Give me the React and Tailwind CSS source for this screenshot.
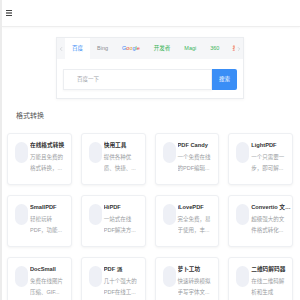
import { ChevronLeft, ChevronRight } from "lucide-react";

const tools = [
    { name: "在线格式转换", lines: ["万能且免费的", "格式转换，..."] },
    { name: "快用工具", lines: ["提供各种优", "质、快捷、..."] },
    { name: "PDF Candy", lines: ["一个免费在线", "的PDF编辑..."] },
    { name: "LightPDF", lines: ["一个只需要一", "步，即可解..."] },
    { name: "SmallPDF", lines: ["轻松玩转", "PDF，功能..."] },
    { name: "HiPDF", lines: ["一站式在线", "PDF解决方..."] },
    { name: "iLovePDF", lines: ["完全免费，易", "于使用，丰..."] },
    { name: "Convertio 文件转换", lines: ["超级强大的文", "件格式转化..."] },
    { name: "DocSmall", lines: ["免费在线图片", "压缩、GIF..."] },
    { name: "PDF 派", lines: ["几十个强大的", "PDF在线工..."] },
    { name: "萝卜工坊", lines: ["快速转换模拟", "手写字体文..."] },
    { name: "二维码解码器", lines: ["在线二维码解", "析和生成"] },
];

function SearchBox() {
    return (
        <div className="ml-[54px] mt-[10px] w-[188px] border border-[#ebedf0] bg-white shadow-[0_1px_3px_rgba(0,0,0,0.04)]">
            {/* Tabs */}
            <div className="flex h-[21px] items-stretch bg-[#f5f6f8] text-[5.5px]">
                <div className="flex w-[8px] items-center justify-center text-[#b5b8bd]">
                    <ChevronLeft className="size-[6px]" strokeWidth={2} />
                </div>
                <div className="flex flex-1 items-stretch overflow-hidden whitespace-nowrap">
                    <div className="flex items-center bg-white px-[7px] text-[#3a8ef6]">百度</div>
                    <div className="flex items-center px-[7px] text-[#8a8d92]">Bing</div>
                    <div className="flex items-center px-[7px]">
                        <span className="text-[#4285f4]">G</span>
                        <span className="text-[#ea4335]">o</span>
                        <span className="text-[#d4a017]">o</span>
                        <span className="text-[#4285f4]">g</span>
                        <span className="text-[#34a853]">l</span>
                        <span className="text-[#ea4335]">e</span>
                    </div>
                    <div className="flex items-center px-[7px] text-[#3cb55a]">开发者</div>
                    <div className="flex items-center px-[7px] text-[#3cb55a]">Magi</div>
                    <div className="flex items-center px-[7px] text-[#3cb55a]">360</div>
                    <div className="flex items-center pl-[6px] text-[#f0553c]">搜</div>
                </div>
                <div className="flex w-[8px] items-center justify-center text-[#b5b8bd]">
                    <ChevronRight className="size-[6px]" strokeWidth={2} />
                </div>
            </div>

            {/* Input */}
            <div className="flex px-[6px] pt-[10px] pb-[8px]">
                <div className="flex h-[21px] flex-1 items-center border border-[#eceef1] pl-[13px] text-[5.5px] text-[#a0a3a8] shadow-[0_1px_2px_rgba(0,0,0,0.04)]">
                    百度一下
                </div>
                <div className="flex h-[21px] w-[25px] items-center justify-center rounded-r-[2px] bg-[#3a8ef6] text-[5.5px] text-white">
                    搜索
                </div>
            </div>
        </div>
    );
}

function ToolCard({ tool }) {
    return (
        <div className="flex h-[52px] gap-[2px] rounded-[3px] border border-[#eef0f3] bg-white pl-[7px] pt-[7px] shadow-[0_1px_3px_rgba(0,0,0,0.05)]">
            <div className="mt-[1px] h-[21px] w-[13px] shrink-0 rounded-full bg-[#eef0f6]" />
            <div className="min-w-0 flex-1 pr-[1px]">
                <div className="truncate text-[5.7px] leading-[8px] font-bold text-[#333]">{tool.name}</div>
                <div className="mt-[3px] text-[5.5px] leading-[11px] text-[#9a9da2]">
                    <div className="whitespace-nowrap">{tool.lines[0]}</div>
                    <div className="truncate">{tool.lines[1]}</div>
                </div>
            </div>
        </div>
    );
}

export default function App() {
    return (
        <div
            className="h-[300px] w-[300px] overflow-hidden border-l-2 border-[#ececec] bg-white"
            style={{ fontFamily: '"Liberation Sans", "Noto Sans CJK SC", sans-serif' }}
        >
            {/* Header */}
            <div className="flex h-[27px] items-center border-b border-[#eeeeee] px-[4px] shadow-[0_1px_2px_rgba(0,0,0,0.03)]">
                <div className="flex w-[6px] flex-col gap-[1px]">
                    <div className="h-[1.5px] bg-[#444]" />
                    <div className="h-[1.5px] bg-[#888]" />
                    <div className="h-[1.5px] bg-[#444]" />
                </div>
            </div>

            <SearchBox />

            {/* Section */}
            <div className="mt-[12px] ml-[14px] text-[7px] leading-[9px] text-[#555]">格式转换</div>

            <div className="mt-[13px] ml-[5px] grid w-[286px] grid-cols-4 gap-x-[9px] gap-y-[10px]">
                {tools.map((tool) => (
                    <ToolCard key={tool.name} tool={tool} />
                ))}
            </div>
        </div>
    );
}
